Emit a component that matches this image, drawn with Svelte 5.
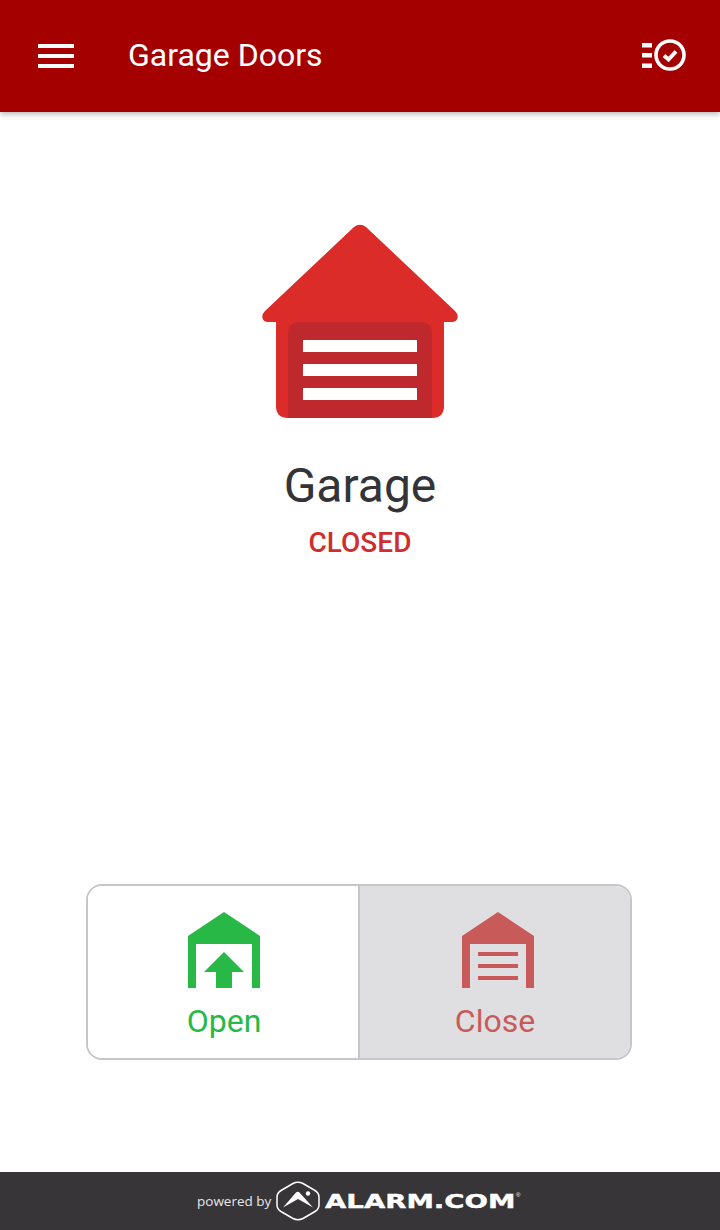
<script>
  const title = 'Garage Doors'
  const device = { name: 'Garage', status: 'CLOSED' }
</script>

<div class="page">
  <header class="bar">
    <button class="menu" aria-label="Menu">
      <i></i><i></i><i></i>
    </button>
    <h1>{title}</h1>
    <svg class="tasks" width="44" height="32" viewBox="0 0 44 32">
      <path d="M0 4h10v4.500H0zM0 14h10v4.500H0zM0 24.500h10v4.500H0z" fill="#fff" />
      <circle cx="28" cy="16" r="14" fill="none" stroke="#fff" stroke-width="3.600" />
      <path d="M22 16.500l4.500 4 7.500-8" fill="none" stroke="#fff" stroke-width="4" />
    </svg>
  </header>

  <main>
    <svg class="house" width="198" height="196" viewBox="0 0 198 196">
      <path d="M93 3Q99 -1.500 105 3L194 87Q197.500 90.500 196.500 94Q195.500 98 191 98H183V182Q183 194 171 194H27Q15 194 15 182V98H7Q2.500 98 1.500 94Q0.500 90.500 4 87Z" fill="#db2c2a" />
      <path d="M27 110Q27 98 39 98H159Q171 98 171 110V194H27Z" fill="#bf282c" />
      <path d="M42 116h114v12H42zM42 140h114v12H42zM42 164h114v12H42z" fill="#fff" />
    </svg>
    <div class="name">{device.name}</div>
    <div class="status">{device.status}</div>

    <div class="actions">
      <button class="action open">
        <svg width="72" height="76" viewBox="0 0 72 76">
          <path d="M36 0L72 24V76H64V32H8V76H0V24Z" fill="currentColor" />
          <path d="M36 40L56 60H44V76H28V60H16Z" fill="currentColor" />
        </svg>
        <span>Open</span>
      </button>
      <button class="action close">
        <svg width="72" height="76" viewBox="0 0 72 76">
          <path d="M36 0L72 24V76H64V32H8V76H0V24Z" fill="currentColor" />
          <path d="M16 40h40v4H16zM16 52h40v4H16zM16 64h40v4H16z" fill="currentColor" />
        </svg>
        <span>Close</span>
      </button>
    </div>
  </main>

  <footer>
    <span class="powered">powered by</span>
    <svg class="hex" width="44" height="40" viewBox="0 0 44 40">
      <path d="M17 2.500Q22 0 27 2.500L39 9.500Q43 12 43 16V24Q43 28 39 30.500L27 37.500Q22 40 17 37.500L5 30.500Q1 28 1 24V16Q1 12 5 9.500Z" fill="none" stroke="#fff" stroke-width="1.500" />
      <path d="M7 26.500L20 11.500Q21.700 10 23.500 11.500L37 26.500L22 18Z" fill="#fff" />
      <circle cx="32" cy="12.500" r="2.200" fill="#fff" />
    </svg>
    <span class="brand">ALARM.COM</span><sup>®</sup>
  </footer>
</div>

<style>
  :global(body) {
    margin: 0;
    background: #fff;
  }

  .page {
    height: 1230px;
    display: flex;
    flex-direction: column;
    font-family: Roboto, sans-serif;
  }

  .bar {
    height: 112px;
    flex: none;
    display: flex;
    align-items: center;
    padding: 0 34px 0 38px;
    background: #a50000;
    box-shadow: 0 2px 6px rgba(0, 0, 0, 0.3);
    position: relative;
  }

  .menu {
    width: 36px;
    height: 24px;
    padding: 0;
    border: 0;
    background: none;
    display: flex;
    flex-direction: column;
    justify-content: space-between;
  }

  .menu i {
    display: block;
    height: 4px;
    background: #fff;
  }

  h1 {
    margin: 0 0 2px 54px;
    flex: 1;
    font-size: 32px;
    font-weight: 400;
    color: #fff;
  }

  .tasks {
    margin-bottom: 2px;
  }

  main {
    flex: 1;
    display: flex;
    flex-direction: column;
    align-items: center;
    padding-top: 112px;
  }

  .house {
    display: block;
    overflow: visible;
  }

  .name {
    margin-top: 35px;
    font-size: 48px;
    line-height: 62px;
    color: #343438;
  }

  .status {
    margin-top: 8px;
    font-size: 28px;
    line-height: 36px;
    font-weight: 500;
    color: #cf2e2e;
  }

  .actions {
    margin-top: auto;
    margin-bottom: 112px;
    align-self: flex-start;
    margin-left: 86px;
    width: 546px;
    height: 176px;
    box-sizing: border-box;
    display: flex;
    border: 2px solid #c6c6ca;
    border-radius: 16px;
    overflow: hidden;
  }

  .action {
    flex: none;
    padding: 26px 0 0;
    border: 0;
    background: #fff;
    font-family: inherit;
    font-size: 32px;
    display: flex;
    flex-direction: column;
    align-items: center;
  }

  .action span {
    line-height: 38px;
    margin-top: 14px;
  }

  .open {
    width: 270px;
    padding-left: 2px;
    color: #27b846;
  }

  .close {
    width: 272px;
    border-left: 2px solid #c6c6ca;
    background: #dfdfe1;
    color: #c95a5a;
  }

  .close svg {
    margin-left: 6px;
  }

  footer {
    height: 58px;
    flex: none;
    display: flex;
    align-items: center;
    padding-left: 197px;
    background: #373538;
    color: #fff;
  }

  .powered {
    font-family: "Open Sans", sans-serif;
    font-size: 13.500px;
    color: #e8e8e8;
    width: 79px;
  }

  .hex {
    flex: none;
  }

  .brand {
    margin-left: 5px;
    width: 190px;
    font-family: "DejaVu Sans", sans-serif;
    font-weight: 700;
    font-size: 19px;
    white-space: nowrap;
    -webkit-text-stroke: 0.4px #fff;
    transform: scaleX(1.45);
    transform-origin: left center;
  }

  sup {
    font-family: "Liberation Sans", sans-serif;
    font-size: 6px;
    align-self: flex-start;
    margin-top: 20px;
    margin-left: 1px;
  }
</style>
